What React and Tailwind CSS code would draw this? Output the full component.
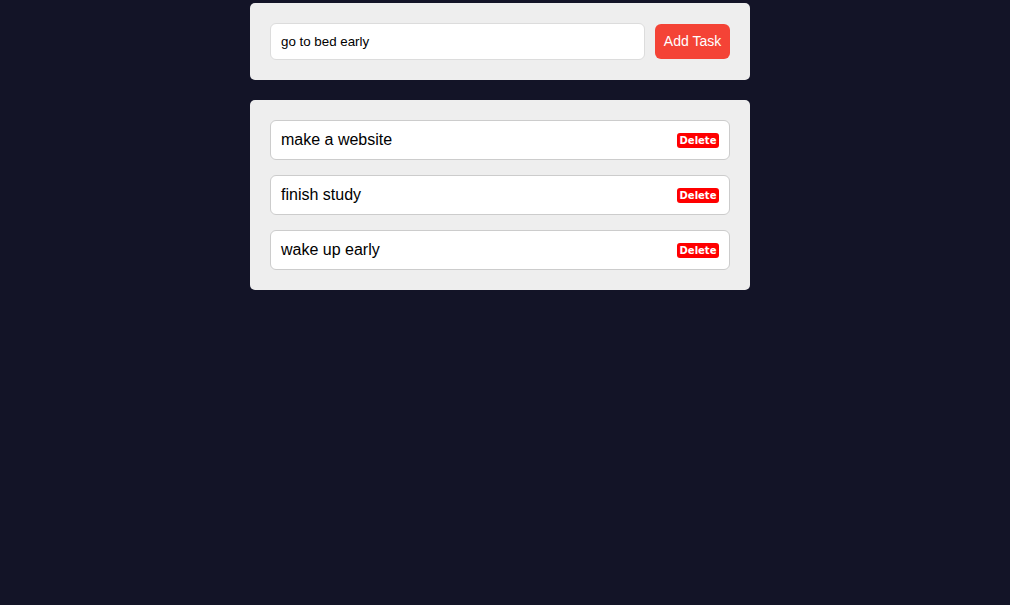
export default function App() {
  const tasks = ["make a website", "finish study", "wake up early"];
  return (
    <div className="flex min-h-[605px] w-full flex-col items-center bg-[#131427] pr-[10px] pt-[3px] font-['Liberation_Sans',Arial,sans-serif]">
      <div className="flex w-[500px] items-center gap-[10px] rounded-[5px] bg-[#eeeeee] px-[20px] py-[20px]">
        <div className="flex h-[37px] flex-1 items-center rounded-[6px] border border-[#dcdcdc] bg-white px-[10px] text-[13.33px] text-black">
          go to bed early
        </div>
        <button className="h-[35px] w-[75px] rounded-[6px] bg-[#f44336] text-[14px] text-white">
          Add Task
        </button>
      </div>
      <div className="mt-[20px] flex w-[500px] flex-col gap-[15px] rounded-[5px] bg-[#eeeeee] p-[20px]">
        {tasks.map((t) => (
          <div
            key={t}
            className="flex h-[40px] items-center justify-between rounded-[6px] border border-[#cccccc] bg-white pl-[10px] pr-[10px]"
          >
            <span className="text-[16px] text-black">{t}</span>
            <button className="flex h-[15px] w-[42px] items-center justify-center rounded-[3px] bg-[#ff0000] font-['DejaVu_Sans',Verdana,sans-serif] text-[10px] font-bold text-white">
              Delete
            </button>
          </div>
        ))}
      </div>
    </div>
  );
}
